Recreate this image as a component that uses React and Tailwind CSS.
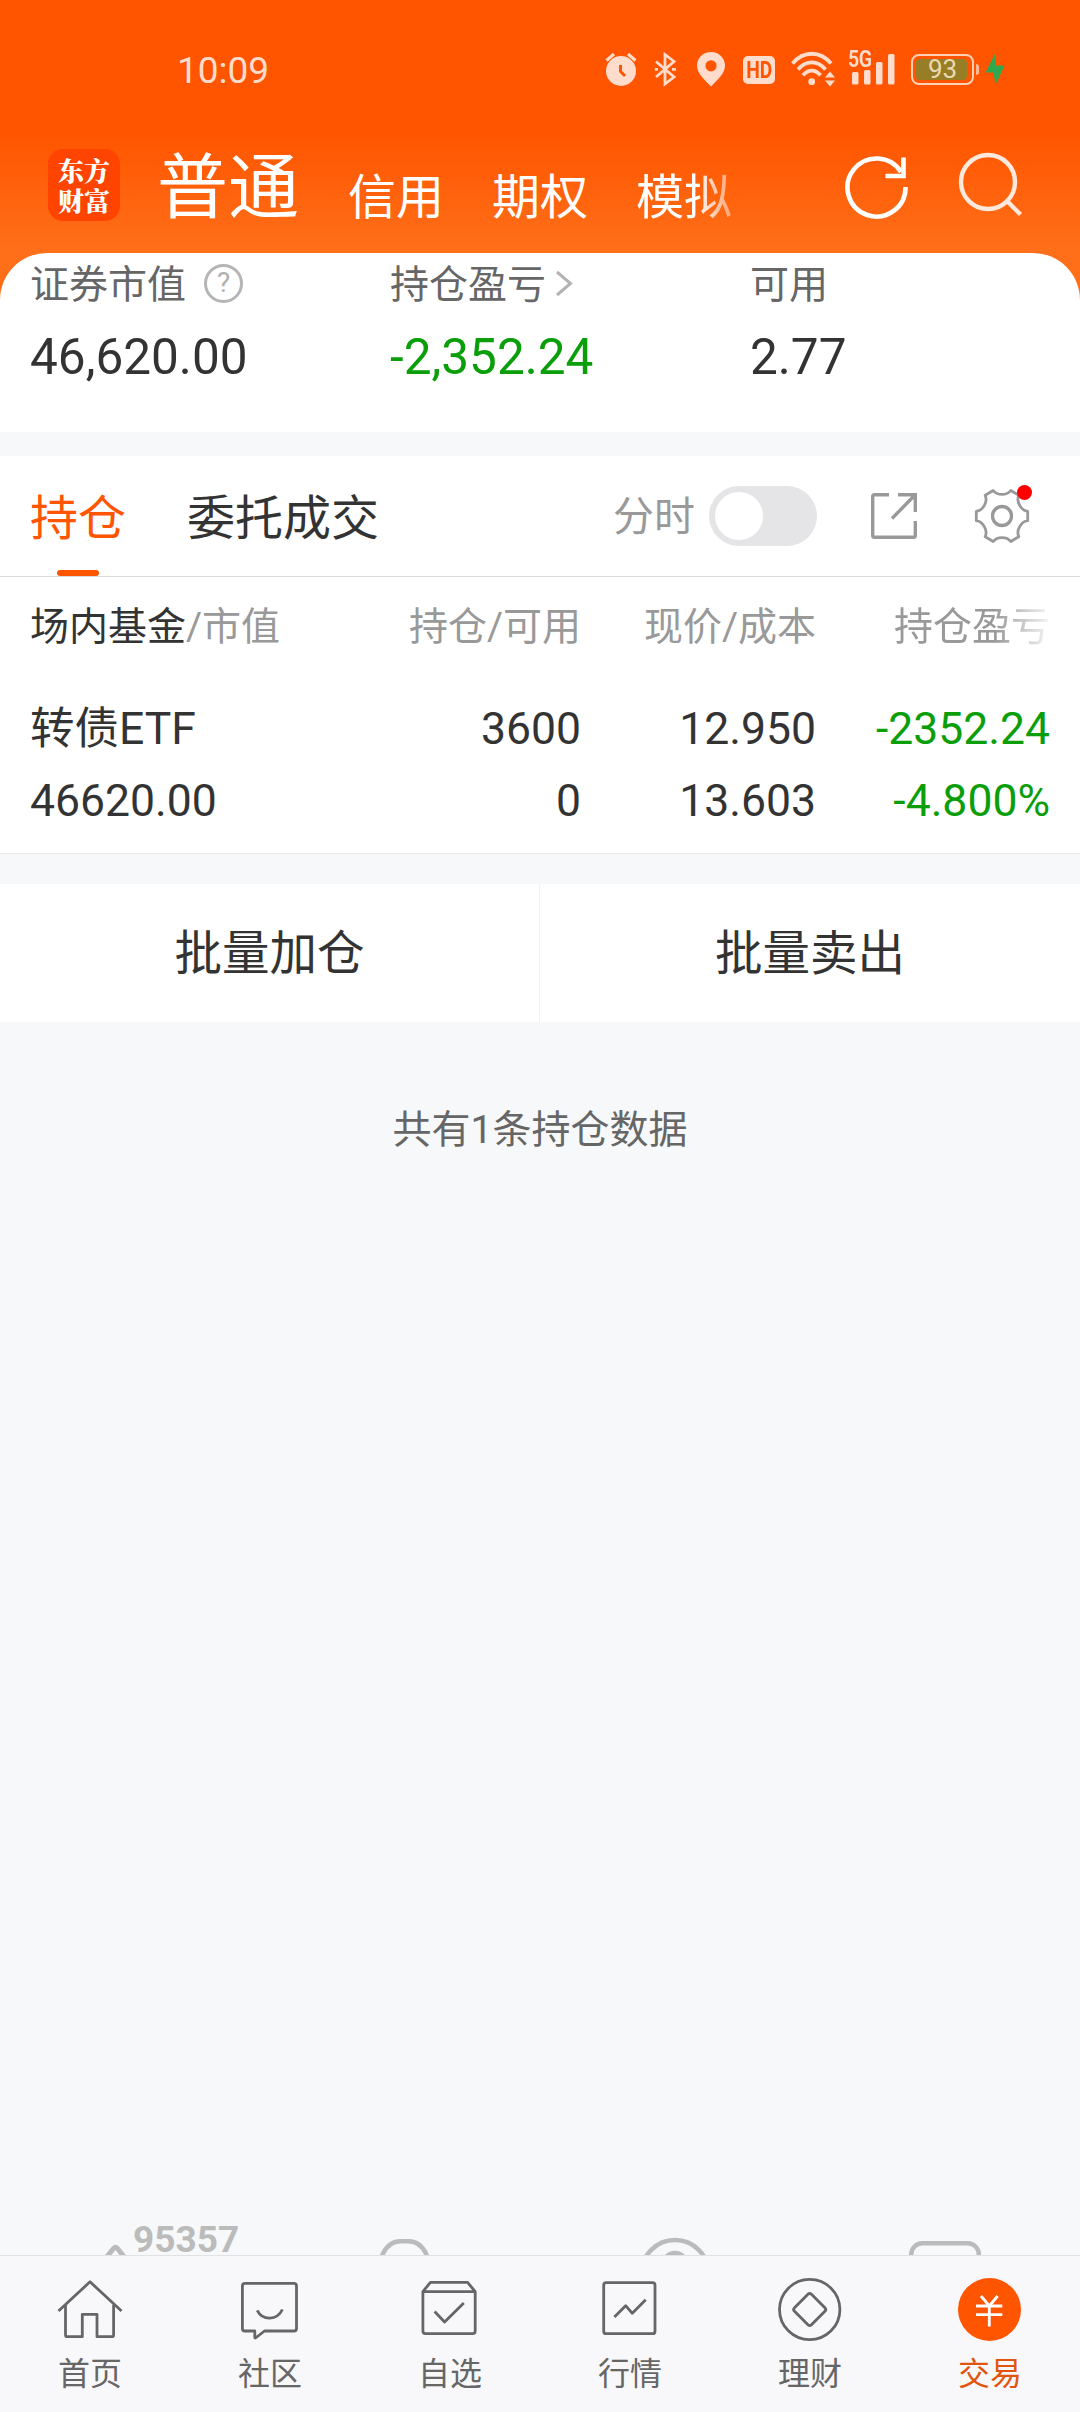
const ACCOUNT_TABS = ['信用', '期权'];

const POSITIONS = [
  {
    name: '转债ETF',
    marketValue: '46620.00',
    amount: '3600',
    available: '0',
    price: '12.950',
    cost: '13.603',
    profit: '-2352.24',
    profitRate: '-4.800%',
  },
];

const AlarmIcon = () => (
  <svg width="34" height="36" viewBox="0 0 34 36" fill="none">
    <circle cx="17" cy="20" r="15" fill="#ffdccb" />
    <path d="M2.5 9.5 10 3M31.5 9.5 24 3" stroke="#ffdccb" strokeWidth="3" />
    <path d="M16.5 14v6.5l4.5 4.5" stroke="#ff5500" strokeWidth="3" />
  </svg>
);

const BluetoothIcon = () => (
  <svg width="24" height="36" viewBox="0 0 24 36" fill="none" stroke="#ffdccb" strokeWidth="2.8">
    <path d="M2 10.5 20 26 11 33V3.500L20 10.500 2 26" />
    <path d="M0.8 18.300H4M18 18.300H22" />
  </svg>
);

const PinIcon = () => (
  <svg width="30" height="36" viewBox="0 0 30 36">
    <path
      fill="#ffdccb"
      fillRule="evenodd"
      d="M15 1C7 1 1 6.900 1 14.500 1 22.500 8.500 29 15 35.500 21.500 29 29 22.500 29 14.500 29 6.900 23 1 15 1Zm0 8.200a5.600 5.600 0 1 1 0 11.200 5.600 5.600 0 0 1 0-11.200Z"
    />
  </svg>
);

const WifiIcon = () => (
  <svg width="45" height="36" viewBox="0 0 45 36" fill="none" stroke="#ffdccb" strokeWidth="3.800">
    <path d="M1.500 12.500C12.500-.5 29-.5 40 12.500" />
    <path d="M7 18.500C15 9 26.500 9 34.500 18.500" />
    <path d="M12 24.300C17.500 18 24 18 29.500 24.300" />
    <circle cx="20.700" cy="30.700" r="3.400" fill="#ffdccb" stroke="none" />
    <path d="M34 26.500 39 20.500 44 26.500ZM34 29.500H44L39 35.500Z" fill="#ffdccb" stroke="none" />
  </svg>
);

const SignalIcon = () => (
  <div className="relative h-9 w-12">
    <span className="absolute left-0 top-0 origin-left scale-x-[0.85] text-[23px] font-semibold leading-[18px] tracking-[-0.5px]">5G</span>
    <svg width="48" height="36" viewBox="0 0 48 36" fill="#ffdccb">
      <rect x="4" y="21" width="6.500" height="12.500" rx="1.500" />
      <rect x="16" y="19" width="6.500" height="14.500" rx="1.500" />
      <rect x="28" y="11" width="6.500" height="22.500" rx="1.500" />
      <rect x="40" y="3" width="6.500" height="30.500" rx="1.500" />
    </svg>
  </div>
);

const Battery = ({ level }) => (
  <div className="flex items-center gap-[2px]">
    <div className="h-[31px] w-[63px] rounded-[8px] border-2 border-[#ffd0b5] p-[3px]">
      <div className="flex h-full w-[51px] items-center justify-center rounded-[4px] bg-[#967d26] pl-[2px] text-[26px] leading-none text-[#ead9b0]">
        {level}
      </div>
    </div>
    <div className="h-[11px] w-[3px] rounded-r bg-[#ffb993]" />
  </div>
);

const BoltIcon = () => (
  <svg width="22" height="36" viewBox="0 0 22 36">
    <path d="M11 3 1.500 21.500H9.500L11.500 34 20.500 14.500H12Z" fill="#2fa84f" />
  </svg>
);

const StatusBar = () => (
  <div className="flex h-[138px] items-center pl-[177px] text-[#ffdccb]">
    <span className="w-[427px] pt-[3px] text-[37px] leading-none">10:09</span>
    <AlarmIcon />
    <div className="ml-4"><BluetoothIcon /></div>
    <div className="ml-[18px]"><PinIcon /></div>
    <div className="ml-[17px] mt-[2px] flex h-[28px] w-[32px] items-center justify-center rounded-[5px] bg-[#ffdccb] text-[#ff5500]">
      <span className="scale-x-[0.8] text-[24px] font-bold leading-none">HD</span>
    </div>
    <div className="ml-4"><WifiIcon /></div>
    <div className="ml-3"><SignalIcon /></div>
    <div className="ml-[15px]"><Battery level="93" /></div>
    <div className="ml-[5px]"><BoltIcon /></div>
  </div>
);

const Header = () => (
  <header className="h-[253px] bg-[linear-gradient(to_bottom,#ff5500_52%,#ff6e18_98%)] text-white">
    <StatusBar />
    <div className="flex h-[94px] items-center pl-12">
      <div className="flex h-[72px] w-[72px] flex-col items-center justify-center rounded-[15px] bg-[#ff4400] font-['Noto_Serif_CJK_SC','Noto_Sans_CJK_SC',sans-serif] text-[26px] font-black leading-[30px]">
        <span>东方</span>
        <span>财富</span>
      </div>
      <span className="ml-[37px] mt-[5px] text-[71px] leading-[94px]">普通</span>
      <nav className="ml-[49px] mt-[25px] flex gap-[48px] text-[48px] leading-[72px]">
        {ACCOUNT_TABS.map((tab) => (
          <span key={tab}>{tab}</span>
        ))}
        <span className="[mask-image:linear-gradient(to_right,#000_62%,transparent_125%)]">模拟</span>
      </nav>
      <svg className="ml-[110px] mt-[2px] shrink-0" width="70" height="70" viewBox="0 0 70 70" fill="none" stroke="#fff" strokeWidth="4.600">
        <path d="M63.500 36A29 29 0 1 1 59 21" />
        <path d="M61.500 6.500V25H43.500" />
      </svg>
      <svg className="ml-[42px] mt-[2px] shrink-0" width="70" height="70" viewBox="0 0 70 70" fill="none" stroke="#ffe8dc" strokeWidth="4.400">
        <circle cx="34" cy="31" r="27" />
        <path d="M53 50 66.500 63.500" />
      </svg>
    </div>
  </header>
);

const SummaryItem = ({ label, value, extra, tone = 'text-[#333]' }) => (
  <div className="pl-[30px]">
    <div className="flex h-[60px] items-center text-[39px] leading-[60px] text-[#666]">
      <span className="pt-[3px]">{label}</span>
      {extra}
    </div>
    <p className={`mt-[14px] text-[49.5px] leading-[60px] ${tone}`}>{value}</p>
  </div>
);

const AccountSummary = () => (
  <div className="bg-[#ff6e18]">
    <section className="grid h-[179px] grid-cols-3 rounded-t-[47px] bg-white">
      <SummaryItem
        label="证券市值"
        value="46,620.00"
        extra={
          <span className="ml-[18px] flex h-[39px] w-[39px] items-center justify-center rounded-full border-[3px] border-[#b5b5b5] text-[28px] leading-none text-[#b0b0b0]">
            ?
          </span>
        }
      />
      <SummaryItem
        label="持仓盈亏"
        value="-2,352.24"
        tone="text-[#0a9e0a]"
        extra={
          <svg className="ml-[9px]" width="20" height="30" viewBox="0 0 20 30" fill="none" stroke="#b3b3b3" strokeWidth="3">
            <path d="M2 4 15.500 15.500 2 27" />
          </svg>
        }
      />
      <SummaryItem label="可用" value="2.77" />
    </section>
  </div>
);

const ExportIcon = () => (
  <svg width="48" height="48" viewBox="0 0 48 48" fill="none" stroke="#999" strokeWidth="3.400">
    <path d="M19 2.700H4.500Q2.700 2.700 2.700 4.500V43.500Q2.700 45.300 4.500 45.300H43.500Q45.300 45.300 45.300 43.500V29" />
    <path d="M28 2.700H45.300V20M45 3 22 26.500" />
  </svg>
);

const GearIcon = () => (
  <svg width="56" height="56" viewBox="0 0 56 56" fill="none" stroke="#999" strokeWidth="2.800" strokeLinejoin="round">
    <path d="M19.200 2.500C23.200 7.700 32.800 7.700 36.800 2.500L44.800 7.300C41.900 13.500 47 22.500 53.700 23.300V32.700C47 33.500 41.900 42.500 44.800 48.700L36.800 53.500C32.800 48.300 23.200 48.300 19.200 53.500L11.200 48.700C14.100 42.500 9 33.500 2.300 32.700V23.300C9 22.500 14.100 13.500 11.200 7.300Z" />
    <circle cx="28" cy="28" r="9.500" strokeWidth="3.300" />
  </svg>
);

const PositionTabs = () => (
  <div className="flex h-[121px] border-b border-[#dcdcdc] bg-white pl-[30px] text-[48px] text-[#333]">
    <div className="flex flex-col items-center text-[#ff5500]">
      <span className="h-[114px] leading-[125px]">持仓</span>
      <span className="h-[6px] w-[42px] rounded-[3px] bg-[#ff5500]" />
    </div>
    <span className="ml-[61px] leading-[125px]">委托成交</span>
    <div className="ml-auto flex items-center pr-[50px]">
      <span className="pt-[4px] text-[41px] text-[#999]">分时</span>
      <button className="ml-[14px] h-[60px] w-[108px] rounded-full bg-[#e5e5e7] p-[6px]">
        <span className="block h-[48px] w-[48px] rounded-full bg-white" />
      </button>
      <div className="ml-[53px]"><ExportIcon /></div>
      <div className="relative ml-[56px]">
        <GearIcon />
        <span className="absolute -top-[3px] right-[-2px] h-[15px] w-[15px] rounded-full bg-[#ff0000]" />
      </div>
    </div>
  </div>
);

const PositionTable = () => (
  <section className="h-[277px] border-b border-[#e8e8ea] bg-white px-[30px] text-[#333]">
    <div className="grid h-[116px] grid-cols-[1fr_200px_235px_234px] text-right text-[39px] leading-[101px] text-[#999]">
      <span className="text-left">
        <span className="text-[#333]">场内基金</span>/市值
      </span>
      <span>持仓/可用</span>
      <span>现价/成本</span>
      <span>
        <span className="inline-block [mask-image:linear-gradient(to_right,#000_64%,transparent_104%)]">持仓盈亏</span>
      </span>
    </div>
    {POSITIONS.map((p) => (
      <div key={p.name} className="grid grid-cols-[1fr_200px_235px_234px] text-right text-[44.5px] leading-[72px]">
        <span className="text-left">{p.name}</span>
        <span>{p.amount}</span>
        <span>{p.price}</span>
        <span className="text-[#0a9e0a]">{p.profit}</span>
        <span className="text-left">{p.marketValue}</span>
        <span>{p.available}</span>
        <span>{p.cost}</span>
        <span className="text-[#0a9e0a]">{p.profitRate}</span>
      </div>
    ))}
  </section>
);

const BatchActions = () => (
  <div className="mt-[30px] grid h-[138px] grid-cols-2 bg-white text-[47.5px] text-[#333]">
    <button className="border-r border-[#f2f2f4] pt-[4px]">批量加仓</button>
    <button className="pt-[4px]">批量卖出</button>
  </div>
);

// Service shortcuts scrolled partly under the bottom bar
const ServiceShortcuts = () => (
  <div className="grid h-[31px] grid-cols-4 overflow-hidden text-[#bbb]">
    <div className="flex pl-[104px]">
      <svg width="24" height="31" viewBox="0 0 24 31" fill="none" stroke="currentColor" strokeWidth="5">
        <path d="M2 34 9.500 24.500Q11.500 22.500 13.500 24.500L21 34" />
      </svg>
      <span className="ml-[5px] text-[37px] font-bold leading-[31px]">95357</span>
    </div>
    <svg className="ml-[108px]" width="56" height="31" viewBox="0 0 56 31" fill="none" stroke="currentColor" strokeWidth="4.500">
      <path d="M3.500 33Q9.500 17.300 22.500 17.300H30.500Q43.500 17.300 49.500 33" />
    </svg>
    <svg className="ml-[95px]" width="80" height="31" viewBox="0 0 80 31" fill="none" stroke="currentColor" strokeWidth="4.500">
      <circle cx="40" cy="49.500" r="33.500" />
      <circle cx="40" cy="40.500" r="11.500" />
    </svg>
    <svg className="ml-[95px]" width="80" height="31" viewBox="0 0 80 31" fill="none" stroke="currentColor" strokeWidth="4.500">
      <rect x="6.300" y="19.300" width="67.500" height="60" rx="11" />
    </svg>
  </div>
);

const NAV_ITEMS = [
  {
    label: '首页',
    icon: (
      <>
        <path d="M4.500 37 36 7.800 67.500 37" />
        <path d="M11.500 31V61Q11.500 62.700 13 62.700H28.300V40.300H43V62.700H58Q59.600 62.700 59.600 61V31" />
      </>
    ),
  },
  {
    label: '社区',
    icon: (
      <>
        <path d="M11 9.300H60Q62.500 9.300 62.500 12V54.500Q62.500 57 60 57H30.500L21.500 64 20.800 63.500V57H11Q8.400 57 8.400 54.500V12Q8.400 9.300 11 9.300Z" />
        <path d="M23.200 36.300C28.500 46.800 43 46.800 48.400 35.500" />
      </>
    ),
  },
  {
    label: '自选',
    icon: (
      <>
        <path d="M8.900 17.700V57Q8.900 59.700 11.500 59.700H58.600Q61.200 59.700 61.200 57V17.700L53.600 8.300H16.400ZM8.900 17.700H61.200" />
        <path d="M20.600 37.500 30.600 48 49.800 29" />
      </>
    ),
  },
  {
    label: '行情',
    icon: (
      <>
        <rect x="9.700" y="8.700" width="51.300" height="51" rx="2.500" />
        <path d="M20.400 43 31.700 31.700 38.300 39.300 51.700 25.700" />
      </>
    ),
  },
  {
    label: '理财',
    icon: (
      <>
        <circle cx="35.700" cy="35.500" r="30.200" />
        <rect x="23.700" y="23.500" width="24" height="24" rx="2.500" transform="rotate(45 35.700 35.500)" />
      </>
    ),
  },
];

const TradeIcon = () => (
  <svg width="72" height="72" viewBox="0 0 72 72" fill="none" stroke="#fff" strokeWidth="2.800">
    <circle cx="35.500" cy="35.500" r="31.500" fill="#ff5500" stroke="none" />
    <path d="M27 22 35.300 32 43.600 22M35.300 32V52.500" />
    <path d="M22 32H48.300M22 40.700H48.300" />
  </svg>
);

const BottomNav = () => (
  <nav className="grid h-[157px] grid-cols-6 border-t border-[#e2e2e4] bg-[#f8f8fa] pt-[18px] text-[32px] leading-[48px] text-[#666]">
    {NAV_ITEMS.map(({ label, icon }) => (
      <div key={label} className="flex flex-col items-center">
        <svg width="72" height="72" viewBox="0 0 72 72" fill="none" stroke="currentColor" strokeWidth="2.800" strokeLinejoin="round">
          {icon}
        </svg>
        <span className="mt-[4px]">{label}</span>
      </div>
    ))}
    <div className="flex flex-col items-center text-[#e0560e]">
      <TradeIcon />
      <span className="mt-[4px]">交易</span>
    </div>
  </nav>
);

const App = () => (
  <div className="flex h-[2412px] w-[1080px] flex-col overflow-hidden bg-[#f7f8fa] font-[Roboto,'Noto_Sans_CJK_SC',sans-serif]">
    <Header />
    <AccountSummary />
    <main className="mt-6 flex-1">
      <PositionTabs />
      <PositionTable />
      <BatchActions />
      <p className="mt-[78px] text-center text-[39px] leading-[60px] text-[#666]">共有1条持仓数据</p>
    </main>
    <ServiceShortcuts />
    <BottomNav />
  </div>
);

export default App;
